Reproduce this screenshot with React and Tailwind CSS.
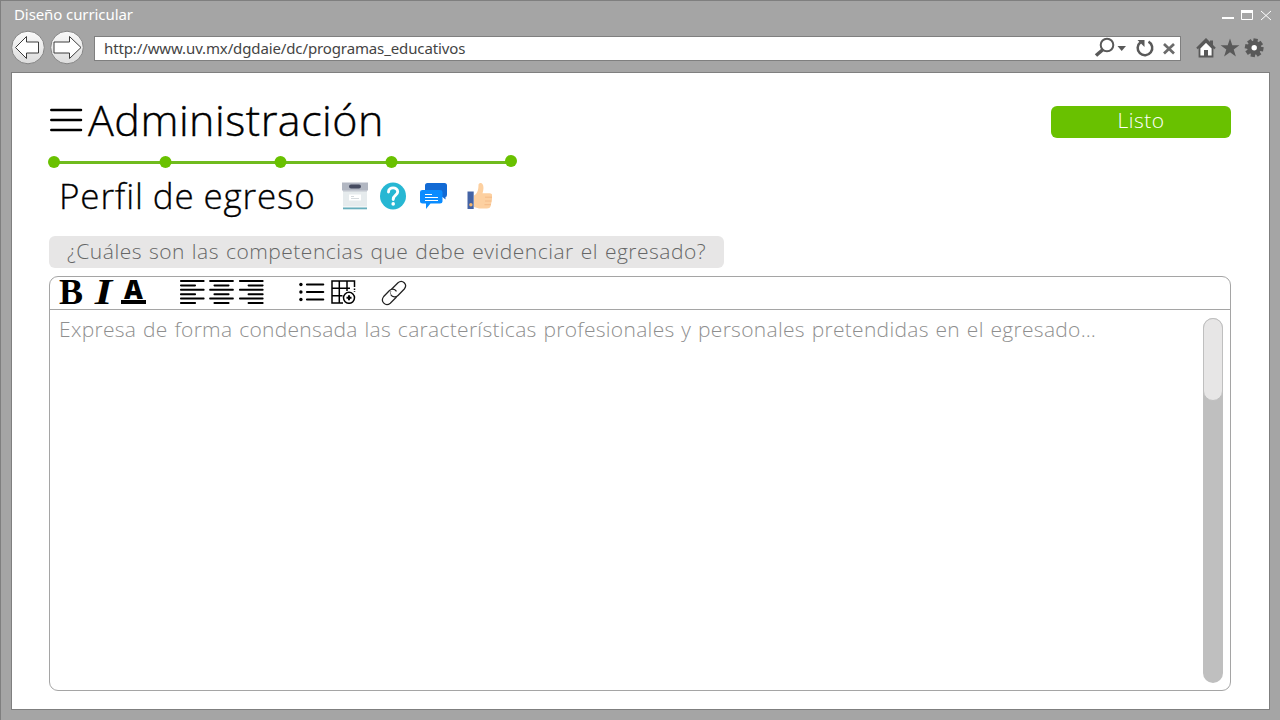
import React from "react";

function NavButton({ flip }) {
  return (
    <svg className="h-[35px] w-[35px] shrink-0" viewBox="0 0 35 35">
      <defs>
        <linearGradient id={flip ? "nb" : "na"} x1="0" y1="0" x2="0" y2="1">
          <stop offset="0" stopColor="#fafafa" />
          <stop offset="1" stopColor="#dcdcdc" />
        </linearGradient>
      </defs>
      <circle cx="17" cy="17.5" r="16.3" fill={flip ? "url(#nb)" : "url(#na)"} stroke="#858585" />
      <path
        transform={flip ? "translate(34.5 0) scale(-1 1)" : undefined}
        d={flip ? "M3.500 17.500L15 6.500V12H30.500V23H15V28.500Z" : "M4.500 17.500L15.500 6.500V12H27.500V23H15.500V28.500Z"}
        fill="#fff"
        stroke="#3c3c3c"
      />
    </svg>
  );
}

function WindowControls() {
  return (
    <svg className="h-4 w-[52px]" viewBox="0 0 52 16">
      <path d="M2 12H14" stroke="#fff" strokeWidth="2" />
      <path d="M21.500 5.500H32.500V13.500H21.500Z" fill="none" stroke="#fff" />
      <path d="M21 5.500H33" stroke="#fff" strokeWidth="3" />
      <path d="M41 5L51 14M51 5L41 14" stroke="#fff" strokeWidth="1" />
    </svg>
  );
}

function AddressIcons() {
  return (
    <svg className="h-[23px] w-[86px]" viewBox="0 0 86 23">
      <circle cx="13" cy="8" r="6.300" fill="none" stroke="#595959" strokeWidth="2" />
      <path d="M9 12.500L2 18.500" stroke="#595959" strokeWidth="3.600" />
      <path d="M23.500 9H32L27.700 14Z" fill="#595959" />
      <path d="M46.500 5.200A7.300 7.300 0 1 0 54.500 4.600" fill="none" stroke="#595959" strokeWidth="2.500" />
      <path d="M43.500 3H50.500V10Z" fill="#595959" />
      <path d="M70 7L80 16.500M80 7L70 16.500" stroke="#6b6b6b" strokeWidth="2.700" />
    </svg>
  );
}

const gearTeeth = [0, 45, 90, 135, 180, 225, 270, 315];

function BrowserIcons() {
  return (
    <svg className="h-5 w-[70px]" viewBox="0 0 70 20">
      <path d="M3.500 10V18.500H16.500V10L10 3.500Z" fill="#fff" stroke="#595959" strokeWidth="1.800" />
      <path d="M1 10.500L10 1.500L19 10.500" fill="none" stroke="#595959" strokeWidth="2.200" />
      <path d="M14 2.500H17V8L14 5Z" fill="#595959" />
      <path d="M8 19V12H12V19Z" fill="#595959" />
      <path d="M34 0.500L36.300 7.200H43.400L37.700 11.500L39.900 18.500L34 14.300L28.100 18.500L30.300 11.500L24.600 7.200H31.700Z" fill="#595959" />
      <g fill="#595959">
        {gearTeeth.map((a) => (
          <rect key={a} x="56" y="0.500" width="4.400" height="6" transform={`rotate(${a + 10} 58.2 9.8)`} />
        ))}
        <circle cx="58.200" cy="9.800" r="7" />
      </g>
      <circle cx="58.200" cy="9.800" r="2.700" fill="#fff" />
    </svg>
  );
}

function Progress() {
  return (
    <svg className="block h-[14px] w-[471px]" viewBox="0 0 471 14">
      <path d="M7 8.500H464" stroke="#70bb1e" strokeWidth="3" />
      <g fill="#69c100">
        <circle cx="7" cy="8" r="6" />
        <circle cx="118.500" cy="8" r="6" />
        <circle cx="233.500" cy="8" r="6" />
        <circle cx="344.500" cy="8" r="6" />
        <circle cx="464" cy="7" r="6" />
      </g>
    </svg>
  );
}

function BoxIcon() {
  return (
    <svg className="h-7 w-[26px]" viewBox="0 0 26 28">
      <path d="M1 7H25V27H1Z" fill="#e6ebed" />
      <path d="M1 7H25V10H1Z" fill="#d3d8dd" />
      <path d="M0 0.500H26V8.500H0Z" fill="#b2b7c2" />
      <rect x="7" y="2.500" width="12" height="4" rx="2" fill="#454b60" />
      <path d="M7 12.500H19V18.500H7Z" fill="#fff" />
      <path d="M9 14.500H12M9 16.500H17" stroke="#d5dadd" />
      <path d="M1 24.500H25V25.500H1Z" fill="#fff" />
      <path d="M1 25.500H25V27.300H1Z" fill="#68aebd" />
    </svg>
  );
}

function HelpIcon() {
  return (
    <svg className="h-7 w-[26px]" viewBox="0 0 26 28">
      <ellipse cx="13" cy="14" rx="13" ry="13.500" fill="#27b7d3" />
      <path d="M8.500 10C8.500 4.400 17.700 4.600 17.700 9.700C17.700 13.400 13.200 13 13.200 17.500" fill="none" stroke="#fff" strokeWidth="2.900" strokeLinecap="round" />
      <circle cx="13.200" cy="21.900" r="1.800" fill="#fff" />
    </svg>
  );
}

function ChatIcon() {
  return (
    <svg className="h-7 w-7" viewBox="0 0 28 28">
      <path d="M7.500 1H24.500Q27 1 27 3.500V12.500Q27 15 25.500 15V17.500L22.500 15H5V3.500Q5 1 7.500 1Z" fill="#126ad4" />
      <path d="M2.500 8H20Q22.500 8 22.500 10V19.500Q22.500 21.500 20 21.500H10.500L6 27V21.500H2.500Q0 21.500 0 19.500V10Q0 8 2.500 8Z" fill="#0a8cff" />
      <path d="M5 12.500H12M5 15.500H18M5 18.500H18" stroke="#fff" strokeWidth="1.100" />
    </svg>
  );
}

function ThumbIcon() {
  return (
    <svg className="h-7 w-[26px]" viewBox="0 0 26 28">
      <path d="M7 13.500C10.500 11.500 11.500 8 11.500 2.500Q12 0.500 14 1C17 2 17 7 15.500 11.300H22.500Q25.500 11.500 25 14L25 17L24.500 20L23.500 24.500Q23 26.500 20 26.500H12L7 25Z" fill="#fdd0a0" />
      <path d="M18 15.200H25M18 19H24.500M17.500 22.700H24" stroke="#f3b986" strokeWidth=".9" />
      <path d="M0.500 9.500H6.700V27H0.500Z" fill="#4463a5" />
      <circle cx="3.900" cy="22.800" r="1.700" fill="#f5b66c" />
    </svg>
  );
}

function AlignIcon({ kind }) {
  const rows = [0, 1, 2, 3, 4, 5];
  return (
    <svg className="h-6 w-[25px]" viewBox="0 0 25 24">
      {rows.map((i) => {
        const w = i % 2 === 0 ? 24.6 : 16;
        const x = kind === "left" ? 0 : kind === "center" ? (25 - w) / 2 : 24.6 - w;
        return <rect key={i} x={x} y={i * 4.4} width={w} height="2" rx=".8" />;
      })}
    </svg>
  );
}

function ListIcon() {
  return (
    <svg className="h-6 w-[26px]" viewBox="0 0 26 24">
      <path d="M8 4.500H24.200M8 12H24.200M8 19.500H24.200" stroke="#000" strokeWidth="2.200" strokeLinecap="round" />
      <circle cx="1.900" cy="4.500" r="1.700" />
      <circle cx="1.900" cy="12" r="1.700" />
      <circle cx="1.900" cy="19.500" r="1.700" />
    </svg>
  );
}

function TableIcon() {
  return (
    <svg className="h-6 w-[25px]" viewBox="0 0 25 24" fill="none" stroke="#000" strokeWidth="1.500">
      <path d="M23.500 7V1H1V23H12M1 8.300H19M1 15.700H11.500M8.300 1V23M16 1V11" />
      <path d="M23.500 8.500V12" strokeDasharray="1.500 1.200" />
      <circle cx="18" cy="17.800" r="5.500" />
      <path d="M15.500 17.800H20.500M18 15.300V20.300" strokeWidth="2" />
    </svg>
  );
}

function LinkIcon() {
  return (
    <svg className="h-[26px] w-[26px]" viewBox="0 0 26 26" fill="none" stroke="#222" strokeWidth="1.250">
      <path d="M10.500 9.300L17 2.700C21.500-1 27 4.500 23.300 9L17 15.500C15 17.500 11.500 17.500 9.800 14.700" />
      <path d="M9.800 14.700Q8.800 12.500 10 11" strokeWidth=".6" />
      <path d="M15.500 11.300C13.500 8.500 10.500 8.500 8.500 10.500L2.700 16.500C-1 21.500 4.500 27 9.300 23.300L15.500 17" />
    </svg>
  );
}

export default function App() {
  return (
    <div className="flex h-[720px] w-[1280px] flex-col overflow-hidden border-t border-l border-[#7f7f7f] bg-[#a5a5a5] pr-[10px] pb-[10px] pl-[10px]">
      <header className="flex h-[28px] shrink-0 items-start justify-between pt-[3px] pl-[3px] font-['Noto_Sans','Open_Sans',sans-serif]">
        <h1 className="text-[15px] leading-5 tracking-[-0.09px] whitespace-nowrap text-white">Diseño curricular</h1>
        <div className="mt-[2px] -mr-[2px]">
          <WindowControls />
        </div>
      </header>
      <nav className="flex h-[43px] shrink-0">
        <div className="mt-[1px] flex gap-1">
          <NavButton />
          <NavButton flip />
        </div>
        <div className="mt-[7px] ml-[9px] flex h-[25px] w-[1087px] items-center justify-between border border-[#7f7f7f] bg-white pl-[9px] font-['Noto_Sans','Open_Sans',sans-serif]">
          <span className="-mt-[1px] text-[15px] leading-5 tracking-[-0.12px] whitespace-nowrap text-[#444]">
            http://www.uv.mx/dgdaie/dc/programas_educativos
          </span>
          <AddressIcons />
        </div>
        <div className="mt-[9px] ml-[15px]">
          <BrowserIcons />
        </div>
      </nav>
      <main className="flex min-h-0 flex-1 flex-col border border-[#7f7f7f] bg-white pr-[38px] pb-[18px] pl-[37px] font-['Open_Sans','Lato',sans-serif]">
        <div className="mt-[23px] flex h-12 shrink-0 items-center justify-between">
          <div className="flex items-center">
            <svg className="h-6 w-[34px]" viewBox="0 0 34 24">
              <path d="M2.300 2H32M2.300 12H32M2.300 22H32" stroke="#000" strokeWidth="2.500" strokeLinecap="round" />
            </svg>
            <h2 className="-mt-[1px] ml-[5px] text-[43px] leading-[48px] font-light tracking-[0.5px] whitespace-nowrap text-black [-webkit-text-stroke:0.4px_#000]">Administración</h2>
          </div>
          <button className="mt-[3px] h-8 w-[180px] rounded-[6px] bg-[#69c100] pb-[3px] text-[21px] leading-[29px] font-light tracking-[0.5px] text-white">
            Listo
          </button>
        </div>
        <div className="mt-[10px] -ml-[2px] h-[14px] shrink-0">
          <Progress />
        </div>
        <div className="mt-[8px] flex h-[46px] shrink-0 pl-[10px]">
          <h3 className="w-[283px] text-[35px] leading-[40px] font-light tracking-[0.85px] whitespace-nowrap text-black [word-spacing:-1px] [-webkit-text-stroke:0.3px_#000]">Perfil de egreso</h3>
          <div className="mt-[6px] flex">
            <BoxIcon />
            <span className="ml-3"><HelpIcon /></span>
            <span className="ml-[14px]"><ChatIcon /></span>
            <span className="ml-[19px]"><ThumbIcon /></span>
          </div>
        </div>
        <div className="mt-[14px] h-8 w-[675px] shrink-0 rounded-[6px] bg-[#e7e6e6] pl-[18px] text-[21px] leading-[31px] font-light tracking-[0.5px] whitespace-nowrap text-[#666] [word-spacing:1px]">
          ¿Cuáles son las competencias que debe evidenciar el egresado?
        </div>
        <section className="mt-2 flex min-h-0 flex-1 flex-col rounded-[9px] border border-[#a5a5a5]">
          <div className="flex h-[33px] shrink-0 items-start border-b border-[#a5a5a5] pl-[9px]">
            <span className="-mt-[6px] w-[33px] font-['Liberation_Serif',serif] text-[36px] leading-[42px] font-bold">B</span>
            <span className="-mt-[6px] w-[29px] scale-x-125 pl-[5px] font-['Liberation_Serif',serif] text-[36px] leading-[42px] font-bold italic">I</span>
            <span className="-mt-[5px] h-[32px] w-[25px] border-b-[4px] border-black text-center font-['Open_Sans',sans-serif] text-[26px] leading-[34px] font-extrabold">A</span>
            <div className="mt-[3px] ml-[34px] flex gap-[4px]">
              <AlignIcon kind="left" />
              <AlignIcon kind="center" />
              <span className="ml-px"><AlignIcon kind="right" /></span>
            </div>
            <span className="mt-[3px] ml-[35px]"><ListIcon /></span>
            <span className="mt-[3px] ml-[6px]"><TableIcon /></span>
            <span className="mt-[3px] ml-[25px]"><LinkIcon /></span>
          </div>
          <div className="flex min-h-0 flex-1 justify-between pt-2 pr-[7px] pb-[7px] pl-[9px]">
            <p className="-mt-[1px] text-[21px] leading-6 font-light tracking-[0.3px] whitespace-nowrap text-[#8f8f8f] [word-spacing:1px]">
              Expresa de forma condensada las características profesionales y personales pretendidas en el egresado…
            </p>
            <div className="h-full w-5 rounded-full bg-[#bfbfbf]">
              <div className="h-[83px] w-5 rounded-full border border-[#bfbfbf] bg-[#e7e6e6]" />
            </div>
          </div>
        </section>
      </main>
    </div>
  );
}
